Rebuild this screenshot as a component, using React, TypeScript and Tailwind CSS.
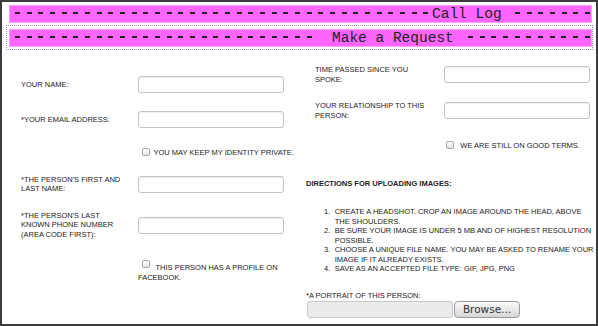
export default function App() {
  const lbl = "text-[7.5px] leading-[9.5px] text-[#222]";
  const input =
    "w-[146px] h-[17px] shrink-0 rounded-[3px] border border-[#c2c2c2] bg-white shadow-[inset_0_1px_1px_rgba(0,0,0,0.06)]";
  const dash =
    "h-full bg-[image:repeating-linear-gradient(90deg,#222_0px,#222_5px,transparent_5px,transparent_11.67px)] bg-no-repeat bg-[length:100%_2px] bg-[position:0_6px]";
  const cb =
    "w-[8px] h-[8px] shrink-0 rounded-[2px] border border-[#a8a8a8] bg-gradient-to-b from-white to-[#e4e4e4]";
  const banner =
    "w-[583px] h-[18px] border border-[#ff9cff] bg-[#ff66ff] flex font-['Liberation_Mono',monospace] text-[14.5px] leading-[16px] text-[#222]";

  return (
    <div className="w-[598px] h-[326px] border-2 border-[#3c3c3c] bg-white overflow-hidden font-['Liberation_Sans',Arial,sans-serif]">
      {/* Banner 1 */}
      <div className={`mt-[3px] ml-[7px] ${banner}`}>
        <div className={`ml-[5px] w-[414px] shrink-0 ${dash}`} />
        <span className="ml-[3px] whitespace-nowrap">Call Log</span>
        <div className={`ml-[13px] flex-1 ${dash}`} />
      </div>

      {/* Banner 2 */}
      <div className="mt-[2px] ml-[4px] w-[587px] h-[25px] border border-dotted border-[#a890cc]">
        <div className={`mt-[3px] ml-[2px] ${banner}`}>
          <div className={`ml-[5px] w-[297px] shrink-0 ${dash}`} />
          <span className="ml-[20px] whitespace-nowrap">Make a Request</span>
          <div className={`ml-[14px] flex-1 ${dash}`} />
        </div>
      </div>

      {/* Form */}
      <div className="flex">
        {/* Left column */}
        <div className="w-[304px] shrink-0 pl-[19px] flex flex-col">
          <div className="mt-[26px] flex items-center">
            <div className={`w-[117px] shrink-0 ${lbl}`}>YOUR NAME:</div>
            <div className={input} />
          </div>
          <div className="mt-[18px] flex items-center">
            <div className={`w-[117px] shrink-0 ${lbl}`}>*YOUR EMAIL ADDRESS:</div>
            <div className={input} />
          </div>
          <div className="mt-[20px] flex items-start">
            <span className={`ml-[121px] ${cb}`} />
            <span className={`ml-[3.5px] whitespace-nowrap ${lbl}`}>
              YOU MAY KEEP MY IDENTITY PRIVATE.
            </span>
          </div>
          <div className="mt-[17.3px] flex items-center">
            <div className={`w-[117px] shrink-0 ${lbl}`}>
              *THE PERSON'S FIRST AND
              <br />
              LAST NAME:
            </div>
            <div className={input} />
          </div>
          <div className="mt-[17px] flex items-center">
            <div className={`w-[117px] shrink-0 ${lbl}`}>
              *THE PERSON'S LAST
              <br />
              KNOWN PHONE NUMBER
              <br />
              (AREA CODE FIRST):
            </div>
            <div className={input} />
          </div>
          <div className="mt-[20.8px] ml-[117px] w-[170px] text-[7.5px] leading-[10px] text-[#222] whitespace-nowrap">
            <span className={`inline-block ml-[4px] mr-[5.5px] align-[1.5px] ${cb}`} />
            THIS PERSON HAS A PROFILE ON
            <br />
            FACEBOOK.
          </div>
        </div>

        {/* Right column */}
        <div className="w-[330px] shrink-0 flex flex-col">
          <div className="mt-[15.3px] flex items-center">
            <div className={`ml-[9px] w-[129px] shrink-0 ${lbl}`}>
              TIME PASSED SINCE YOU
              <br />
              SPOKE:
            </div>
            <div className={input} />
          </div>
          <div className="mt-[17px] flex items-center">
            <div className={`ml-[9px] w-[129px] shrink-0 ${lbl}`}>
              YOUR RELATIONSHIP TO THIS
              <br />
              PERSON:
            </div>
            <div className={input} />
          </div>
          <div className="mt-[21px] flex items-start">
            <span className={`ml-[140.3px] ${cb}`} />
            <span className={`ml-[6px] whitespace-nowrap ${lbl}`}>WE ARE STILL ON GOOD TERMS.</span>
          </div>
          <div className={`mt-[28.7px] font-bold whitespace-nowrap ${lbl}`}>
            DIRECTIONS FOR UPLOADING IMAGES:
          </div>
          <ol className={`mt-[18.3px] pl-[18px] ${lbl}`}>
            <li className="flex">
              <span className="w-[10.7px] shrink-0">1.</span>
              <span className="whitespace-nowrap">
                CREATE A HEADSHOT. CROP AN IMAGE AROUND THE HEAD, ABOVE
                <br />
                THE SHOULDERS.
              </span>
            </li>
            <li className="flex">
              <span className="w-[10.7px] shrink-0">2.</span>
              <span className="whitespace-nowrap">
                BE SURE YOUR IMAGE IS UNDER 5 MB AND OF HIGHEST RESOLUTION
                <br />
                POSSIBLE.
              </span>
            </li>
            <li className="flex">
              <span className="w-[10.7px] shrink-0">3.</span>
              <span className="whitespace-nowrap">
                CHOOSE A UNIQUE FILE NAME. YOU MAY BE ASKED TO RENAME YOUR
                <br />
                IMAGE IF IT ALREADY EXISTS.
              </span>
            </li>
            <li className="flex">
              <span className="w-[10.7px] shrink-0">4.</span>
              <span className="whitespace-nowrap">SAVE AS AN ACCEPTED FILE TYPE: GIF, JPG, PNG</span>
            </li>
          </ol>
          <div className={`mt-[17.5px] whitespace-nowrap ${lbl}`}>*A PORTRAIT OF THIS PERSON:</div>
          <div className="flex">
            <div className="ml-[1px] w-[146px] h-[17px] rounded-[3px] border border-[#c8c8c8] bg-[#ebebeb]" />
            <div className="ml-[1px] w-[66px] h-[17px] rounded-[4px] border border-[#9a9a9a] bg-gradient-to-b from-[#fafafa] to-[#d6d6d6] flex items-center justify-center font-['DejaVu_Sans',sans-serif] text-[10.5px] text-[#333] leading-none">
              Browse...
            </div>
          </div>
        </div>
      </div>
    </div>
  );
}
